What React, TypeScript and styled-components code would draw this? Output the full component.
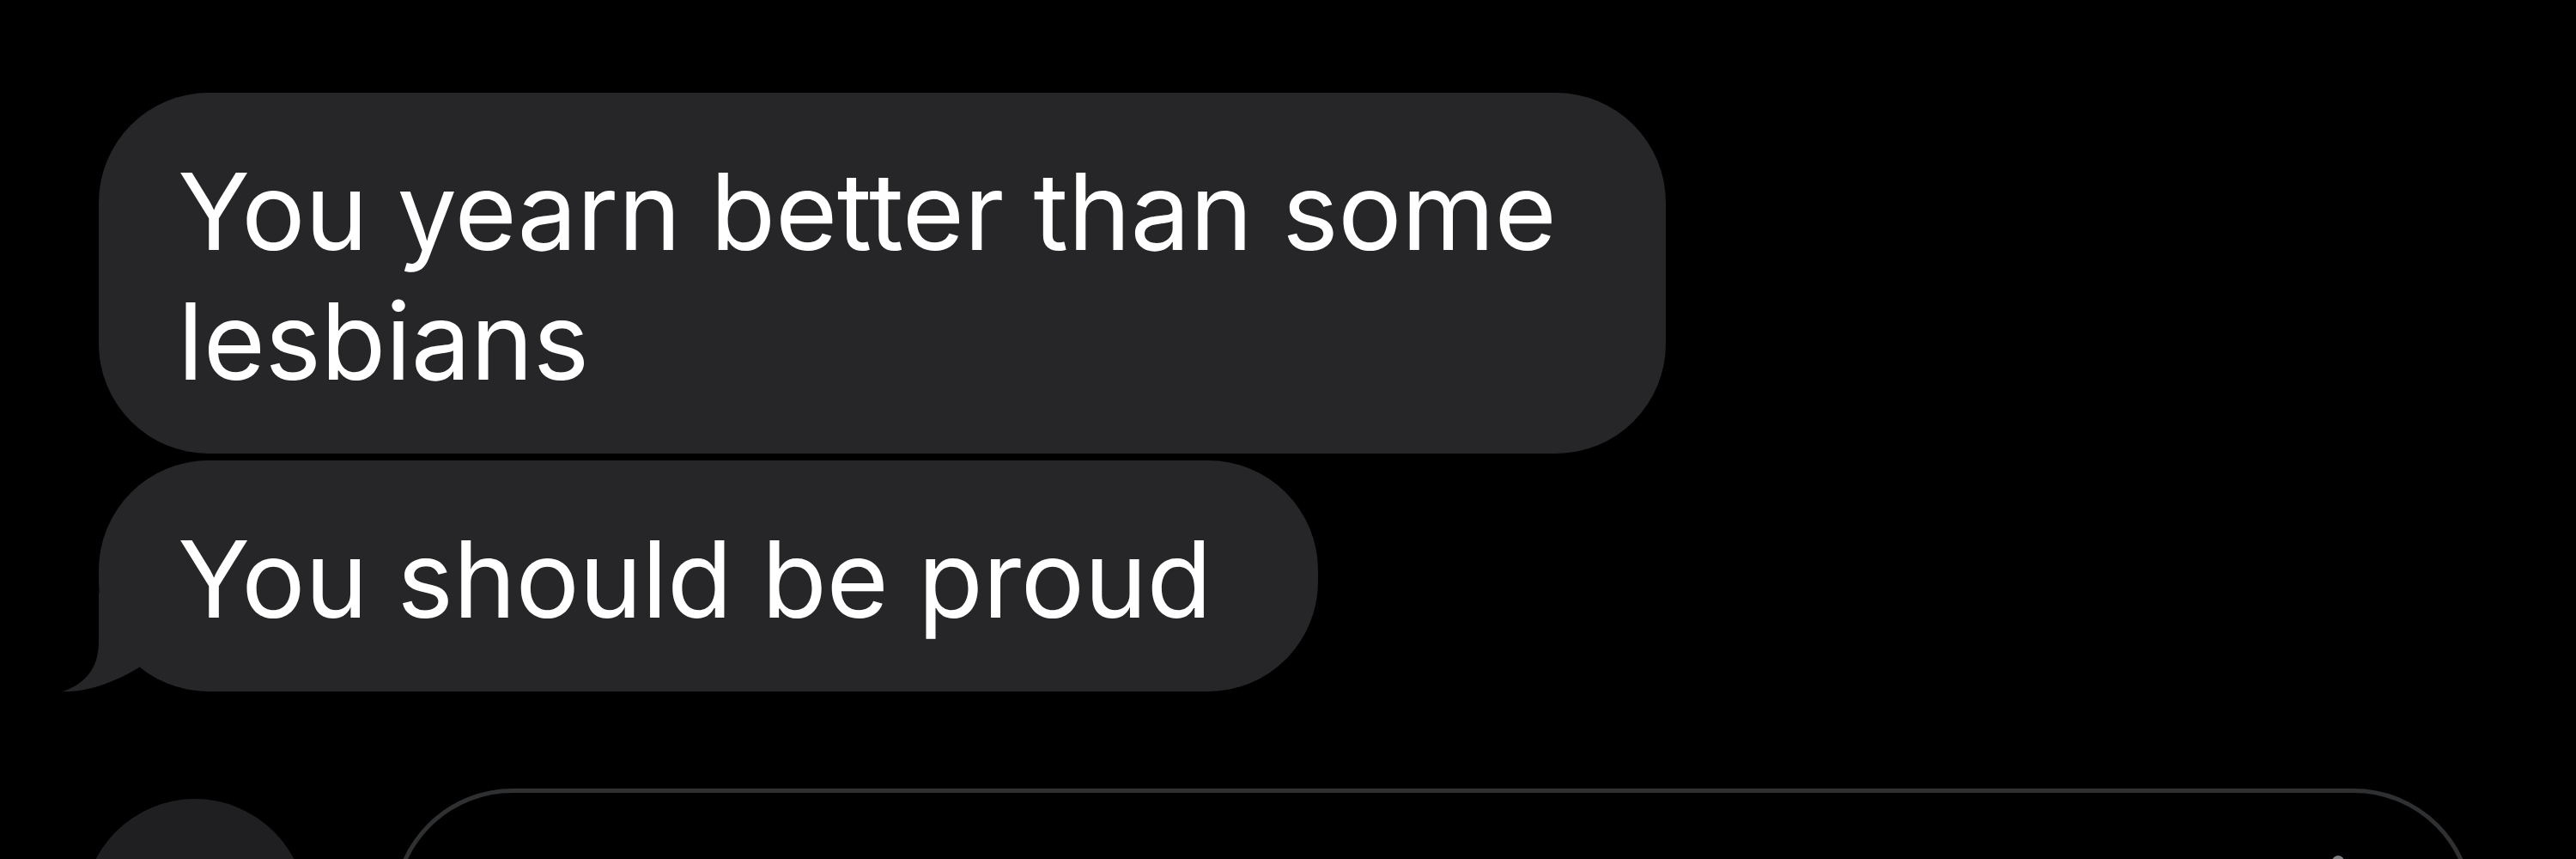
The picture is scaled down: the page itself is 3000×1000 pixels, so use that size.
import React from "react";
import styled, { createGlobalStyle } from "styled-components";

const GlobalStyle = createGlobalStyle`
    html, body {
        margin: 0;
        padding: 0;
        background: #000;
    }
`;

const Screen = styled.div`
    height: 1000px;
    overflow: hidden;
    background: #000;
    padding-top: 108px;
    box-sizing: border-box;
    font-family: Inter, "Noto Sans", "Liberation Sans", sans-serif;
    -webkit-font-smoothing: antialiased;
`;

const Thread = styled.div`
    display: flex;
    flex-direction: column;
    align-items: flex-start;
    gap: 8px;
    padding-left: 115px;
`;

const Bubble = styled.div`
    position: relative;
    box-sizing: border-box;
    width: fit-content;
    max-width: 1825px;
    padding: 63px 124px 55px 92px;
    border-radius: 128px;
    background: #262629;
    color: #fff;
    font-size: 124px;
    line-height: 151px;
    letter-spacing: -0.4px;
`;

const Tail = styled.svg`
    position: absolute;
    left: -55px;
    bottom: 0;
    width: 130px;
    height: 120px;
`;

const Composer = styled.div`
    display: flex;
    align-items: flex-start;
    gap: 100px;
    margin-top: 113px;
    padding-left: 97px;
`;

const AppsButton = styled.div`
    flex: none;
    width: 260px;
    height: 260px;
    margin-top: 12px;
    border-radius: 50%;
    background: #1f1f21;
`;

const InputField = styled.div`
    flex: none;
    display: flex;
    justify-content: flex-end;
    box-sizing: border-box;
    width: 2424px;
    height: 300px;
    padding: 73px 108px 0 0;
    border: 5px solid #2e3032;
    border-radius: 140px;
`;

const Waveform = styled.svg`
    width: 90px;
    height: 100px;
`;

type MessageProps = { text: string; tail?: boolean };

const Message: React.FC<MessageProps> = ({ text, tail }) => (
    <Bubble>
        {text}
        {tail && (
            <Tail viewBox="0 0 130 120">
                <path
                    d="M55 5 L55 62 C55 92 40 111 13 120 C42 121 72 110 102 92 L120 35 Z"
                    fill="#262629"
                />
            </Tail>
        )}
    </Bubble>
);

export default function App() {
    return (
        <Screen>
            <GlobalStyle />
            <Thread>
                <Message text="You yearn better than some lesbians" />
                <Message text="You should be proud" tail />
            </Thread>
            <Composer>
                <AppsButton />
                <InputField>
                    <Waveform viewBox="0 0 90 100">
                        <rect x="0" y="30" width="14" height="40" rx="7" fill="#7d7d82" />
                        <rect x="19" y="14" width="14" height="72" rx="7" fill="#7d7d82" />
                        <rect x="38" y="0" width="14" height="100" rx="7" fill="#7d7d82" />
                        <rect x="57" y="14" width="14" height="72" rx="7" fill="#7d7d82" />
                        <rect x="76" y="30" width="14" height="40" rx="7" fill="#7d7d82" />
                    </Waveform>
                </InputField>
            </Composer>
        </Screen>
    );
}
